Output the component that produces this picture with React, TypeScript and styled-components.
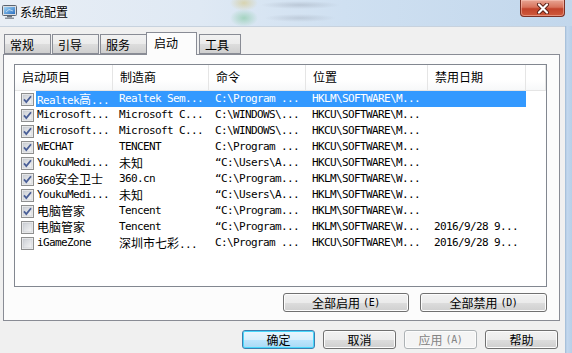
import React from "react";
import styled, { createGlobalStyle } from "styled-components";

const GlobalStyle = createGlobalStyle`
  html, body {
    margin: 0;
    padding: 0;
    overflow: hidden;
    background: #f0f0f0;
  }
`;

const UI_FONT = `"Noto Sans CJK SC", "Noto Sans", sans-serif`;
const MONO_FONT = `"DejaVu Sans Mono", "Liberation Mono", monospace`;

const Window = styled.div`
  width: 572px;
  height: 353px;
  display: flex;
  flex-direction: column;
  font-family: ${UI_FONT};
  font-size: 12px;
  color: #000;
`;

const TitleBar = styled.div`
  height: 26px;
  flex-shrink: 0;
  display: flex;
  align-items: flex-start;
  background:
    radial-gradient(ellipse 14px 8px at 244px 3px, rgba(214, 196, 120, 0.55), transparent),
    radial-gradient(ellipse 14px 9px at 244px 18px, rgba(120, 196, 150, 0.55), transparent),
    radial-gradient(ellipse 40px 4px at 300px 5px, rgba(150, 160, 175, 0.4), transparent),
    radial-gradient(ellipse 36px 4px at 300px 18px, rgba(150, 160, 175, 0.35), transparent),
    linear-gradient(90deg, #e8eef5 0%, #dfe9f4 35%, #cfe0f1 60%, #c2d7ec 100%);
`;

const TitleIcon = styled.svg`
  margin: 5px 0 0 2px;
  flex-shrink: 0;
`;

const TitleText = styled.span`
  margin: 4px 0 0 3px;
  line-height: 16px;
  text-shadow: 0 0 6px #fff, 0 0 4px #fff;
`;

const CloseButton = styled.div`
  margin-left: auto;
  margin-right: 7px;
  width: 45px;
  height: 17px;
  box-sizing: border-box;
  border: 1px solid #7c3024;
  border-top: none;
  border-radius: 0 0 4px 4px;
  background: linear-gradient(#e8a493 0%, #d8735c 45%, #c2432b 55%, #cf5a3c 100%);
  box-shadow: inset 0 0 0 1px rgba(255, 210, 200, 0.45);
  display: flex;
  align-items: center;
  justify-content: center;
`;

const Content = styled.div`
  flex: 1;
  display: flex;
`;

const Body = styled.div`
  flex: 1;
  display: flex;
  flex-direction: column;
  padding: 5px 5px 0 3px;
  background: #f0f0f0;
  border-top: 1px solid #c7d2de;
`;

const Frame = styled.div`
  width: 7px;
  flex-shrink: 0;
  background: linear-gradient(90deg, #9fb9d4 0px, #c3d8ee 2px, #b7cfe8 100%);
`;

const TabStrip = styled.div`
  height: 22px;
  display: flex;
  align-items: flex-end;
  padding-left: 1px;
`;

const Tab = styled.div<{ $w: number; $gap: number; $active?: boolean }>`
  width: ${(p) => p.$w}px;
  margin-left: ${(p) => p.$gap}px;
  box-sizing: border-box;
  border: 1px solid #898c95;
  border-bottom: ${(p) => (p.$active ? "none" : "1px solid #898c95")};
  height: ${(p) => (p.$active ? 23 : 20)}px;
  margin-bottom: ${(p) => (p.$active ? -1 : 0)}px;
  position: relative;
  z-index: ${(p) => (p.$active ? 1 : 0)};
  padding: ${(p) => (p.$active ? "3px 0 0 7px" : "3px 0 0 5px")};
  line-height: 14px;
  background: ${(p) =>
    p.$active ? "#fcfcfc" : "linear-gradient(#f2f2f2 0%, #ebebeb 50%, #dddddd 51%, #cfcfcf 100%)"};
`;

const Panel = styled.div`
  height: 267px;
  box-sizing: border-box;
  border: 1px solid #898c95;
  background: #fcfcfc;
  display: flex;
  flex-direction: column;
  padding: 9px 12px 8px 10px;
`;

const ListView = styled.div`
  height: 223px;
  box-sizing: border-box;
  border: 1px solid #828790;
  background: #fff;
  display: flex;
  flex-direction: column;
  overflow: hidden;
`;

const Header = styled.div`
  height: 25px;
  flex-shrink: 0;
  display: flex;
  border-bottom: 1px solid #e5e5e5;
  background: linear-gradient(#ffffff 0%, #ffffff 60%, #f7f8f9 100%);
`;

const HeaderCell = styled.div<{ $w?: number }>`
  width: ${(p) => (p.$w ? `${p.$w}px` : "auto")};
  flex: ${(p) => (p.$w ? "none" : 1)};
  box-sizing: border-box;
  border-right: 1px solid #e5e5e5;
  padding: 4px 0 0 7px;
  line-height: 16px;
`;

const Row = styled.div`
  height: 16px;
  display: flex;
  font-family: ${MONO_FONT};
  font-size: 11px;
  letter-spacing: -0.62px;
  line-height: 16px;
`;

const CheckArea = styled.div`
  width: 21px;
  flex-shrink: 0;
  display: flex;
  align-items: center;
  padding-left: 6px;
  box-sizing: border-box;
`;

const Cells = styled.div<{ $selected?: boolean }>`
  display: grid;
  grid-template-columns: 77px 96px 97px 122px 98px;
  background: ${(p) => (p.$selected ? "#3399ff" : "transparent")};
  color: ${(p) => (p.$selected ? "#fff" : "#000")};
`;

const Cell = styled.div<{ $first?: boolean }>`
  padding-left: ${(p) => (p.$first ? 1 : 6)}px;
  white-space: nowrap;
  overflow: hidden;
`;

const Han = styled.span`
  font-family: ${UI_FONT};
  font-size: 12px;
  letter-spacing: 0;
`;

const Small = styled.span<{ $muted?: boolean }>`
  font-family: ${MONO_FONT};
  font-size: 10px;
  letter-spacing: -0.4px;
  margin-left: 3px;
`;

const ButtonRow = styled.div<{ $gap: number; $top: number; $right?: number }>`
  display: flex;
  justify-content: flex-end;
  gap: ${(p) => p.$gap}px;
  margin-top: ${(p) => p.$top}px;
  margin-right: ${(p) => p.$right || 0}px;
`;

const Button = styled.div<{ $w: number; $default?: boolean; $disabled?: boolean }>`
  width: ${(p) => p.$w}px;
  height: 19px;
  box-sizing: border-box;
  border: 1px solid ${(p) => (p.$default ? "#3c7fb1" : p.$disabled ? "#adb2b5" : "#707070")};
  border-radius: 3px;
  background: ${(p) =>
    p.$disabled
      ? "#f4f4f4"
      : p.$default
      ? "linear-gradient(#eaf6fd 0%, #d9f0fc 50%, #bee6fd 51%, #a7d9f5 100%)"
      : "linear-gradient(#f2f2f2 0%, #ebebeb 50%, #dddddd 51%, #cfcfcf 100%)"};
  box-shadow: ${(p) => (p.$default ? "inset 0 0 0 1px #48d8fb" : "inset 0 0 0 1px #fcfcfc")};
  color: ${(p) => (p.$disabled ? "#838383" : "#000")};
  display: flex;
  align-items: center;
  justify-content: center;
  line-height: 16px;
`;

const Footer = styled.div`
  display: flex;
  justify-content: flex-end;
`;

const mixed = (text: string) =>
  text.split(/([\u3400-\u9fff]+)/).map((part, i) =>
    /[\u3400-\u9fff]/.test(part) ? <Han key={i}>{part}</Han> : part
  );

const CheckBox: React.FC<{ checked: boolean }> = ({ checked }) => (
  <svg width="13" height="13" viewBox="0 0 13 13">
    <defs>
      <linearGradient id="cbfill" x1="0" y1="0" x2="1" y2="1">
        <stop offset="0" stopColor="#cbcfd5" />
        <stop offset="1" stopColor="#f6f6f6" />
      </linearGradient>
    </defs>
    <rect x="0.5" y="0.5" width="12" height="12" fill="#f4f4f4" stroke="#8e8f8f" />
    <rect x="2" y="2" width="9" height="9" fill="url(#cbfill)" stroke="#c4c7cc" strokeWidth="0.6" />
    {checked && (
      <path d="M3 6.4 L5.3 9 L10 3.2" fill="none" stroke="#4a5f97" strokeWidth="1.8" />
    )}
  </svg>
);

type Item = {
  on: boolean;
  selected?: boolean;
  name: string;
  maker: string;
  cmd: string;
  loc: string;
  date: string;
};

const items: Item[] = [
  { on: true, selected: true, name: "Realtek高...", maker: "Realtek Sem...", cmd: "C:\\Program ...", loc: "HKLM\\SOFTWARE\\M...", date: "" },
  { on: true, name: "Microsoft...", maker: "Microsoft C...", cmd: "C:\\WINDOWS\\...", loc: "HKCU\\SOFTWARE\\M...", date: "" },
  { on: true, name: "Microsoft...", maker: "Microsoft C...", cmd: "C:\\WINDOWS\\...", loc: "HKCU\\SOFTWARE\\M...", date: "" },
  { on: true, name: "WECHAT", maker: "TENCENT", cmd: "C:\\Program ...", loc: "HKCU\\SOFTWARE\\M...", date: "" },
  { on: true, name: "YoukuMedi...", maker: "未知", cmd: "\u201CC:\\Users\\A...", loc: "HKCU\\SOFTWARE\\M...", date: "" },
  { on: true, name: "360安全卫士", maker: "360.cn", cmd: "\u201CC:\\Program...", loc: "HKLM\\SOFTWARE\\W...", date: "" },
  { on: true, name: "YoukuMedi...", maker: "未知", cmd: "\u201CC:\\Users\\A...", loc: "HKLM\\SOFTWARE\\W...", date: "" },
  { on: true, name: "电脑管家", maker: "Tencent", cmd: "\u201CC:\\Program...", loc: "HKLM\\SOFTWARE\\W...", date: "" },
  { on: false, name: "电脑管家", maker: "Tencent", cmd: "\u201CC:\\Program...", loc: "HKLM\\SOFTWARE\\W...", date: "2016/9/28 9..." },
  { on: false, name: "iGameZone", maker: "深圳市七彩...", cmd: "C:\\Program ...", loc: "HKCU\\SOFTWARE\\M...", date: "2016/9/28 9..." },
];

const App: React.FC = () => (
  <>
    <GlobalStyle />
    <Window>
      <TitleBar>
        <TitleIcon width="15" height="14" viewBox="0 0 15 14">
          <defs>
            <linearGradient id="scr" x1="0" y1="0" x2="1" y2="1">
              <stop offset="0" stopColor="#9fd4f5" />
              <stop offset="1" stopColor="#2a6fc0" />
            </linearGradient>
          </defs>
          <rect x="0.5" y="0.5" width="14" height="10" rx="1" fill="#d9dde2" stroke="#5b6470" />
          <rect x="2" y="2" width="11" height="7" fill="url(#scr)" />
          <path d="M4 7 L7 4.5 L11 6" stroke="#ffffff" strokeWidth="0.8" fill="none" opacity="0.7" />
          <rect x="5" y="11" width="5" height="1.5" fill="#6b737d" />
          <rect x="3" y="12.5" width="9" height="1.5" fill="#8a929c" />
        </TitleIcon>
        <TitleText>系统配置</TitleText>
        <CloseButton>
          <svg width="14" height="11" viewBox="0 0 14 11">
            <path d="M3 1.5 L11 9.5 M11 1.5 L3 9.5" stroke="#5a1f16" strokeWidth="4" strokeLinecap="round" />
            <path d="M3 1.5 L11 9.5 M11 1.5 L3 9.5" stroke="#ffffff" strokeWidth="2.2" strokeLinecap="round" />
          </svg>
        </CloseButton>
      </TitleBar>
      <Content>
        <Body>
          <TabStrip>
            <Tab $w={47} $gap={0}>常规</Tab>
            <Tab $w={47} $gap={1}>引导</Tab>
            <Tab $w={47} $gap={1}>服务</Tab>
            <Tab $w={51} $gap={-1} $active>启动</Tab>
            <Tab $w={42} $gap={2}>工具</Tab>
          </TabStrip>
          <Panel>
            <ListView>
              <Header>
                <HeaderCell $w={98}>启动项目</HeaderCell>
                <HeaderCell $w={96}>制造商</HeaderCell>
                <HeaderCell $w={97}>命令</HeaderCell>
                <HeaderCell $w={122}>位置</HeaderCell>
                <HeaderCell $w={98}>禁用日期</HeaderCell>
                <HeaderCell />
              </Header>
              {items.map((it, i) => (
                <Row key={i}>
                  <CheckArea>
                    <CheckBox checked={it.on} />
                  </CheckArea>
                  <Cells $selected={it.selected}>
                    <Cell $first>{mixed(it.name)}</Cell>
                    <Cell>{mixed(it.maker)}</Cell>
                    <Cell>{it.cmd}</Cell>
                    <Cell>{it.loc}</Cell>
                    <Cell>{it.date}</Cell>
                  </Cells>
                </Row>
              ))}
            </ListView>
            <ButtonRow $gap={11} $top={6}>
              <Button $w={126}>
                全部启用<Small>(E)</Small>
              </Button>
              <Button $w={127}>
                全部禁用<Small>(D)</Small>
              </Button>
            </ButtonRow>
          </Panel>
          <Footer>
            <ButtonRow $gap={8} $top={9} $right={2}>
              <Button $w={73} $default>确定</Button>
              <Button $w={73}>取消</Button>
              <Button $w={73} $disabled>
                应用<Small>(A)</Small>
              </Button>
              <Button $w={73}>帮助</Button>
            </ButtonRow>
          </Footer>
        </Body>
        <Frame />
      </Content>
    </Window>
  </>
);

export default App;
